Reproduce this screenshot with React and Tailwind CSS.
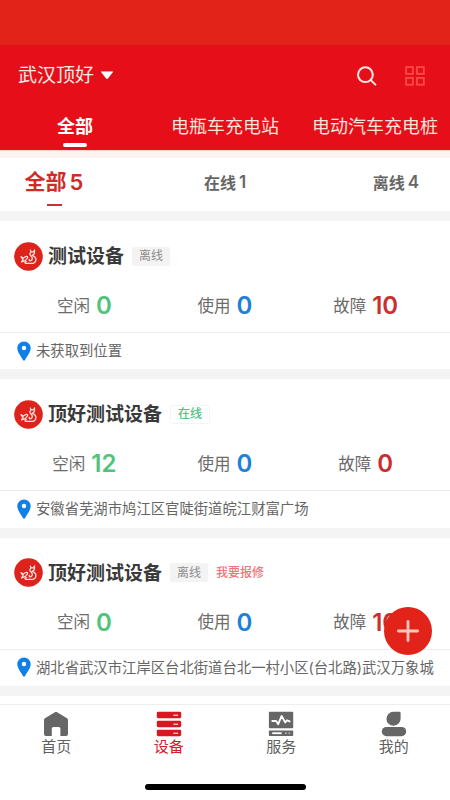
import React from "react";

const CATEGORIES = ["全部", "电瓶车充电站", "电动汽车充电桩"];

const FILTERS = [
  { label: "全部", count: 5, active: true },
  { label: "在线", count: 1 },
  { label: "离线", count: 4 },
];

const DEVICES = [
  { name: "测试设备", online: false, idle: 0, used: 0, fault: 10, address: "未获取到位置" },
  {
    name: "顶好测试设备",
    online: true,
    idle: 12,
    used: 0,
    fault: 0,
    address: "安徽省芜湖市鸠江区官陡街道皖江财富广场",
  },
  {
    name: "顶好测试设备",
    online: false,
    repair: true,
    idle: 0,
    used: 0,
    fault: 10,
    address: "湖北省武汉市江岸区台北街道台北一村小区(台北路)武汉万象城",
  },
];

/* ─── icons ─── */
function SearchIcon() {
  return (
    <svg width="20" height="20" viewBox="0 0 20 20" fill="none" stroke="#ffe9e4" strokeWidth="2" strokeLinecap="round">
      <circle cx="8.4" cy="8.7" r="7.4" />
      <path d="M13.8 14.1L18.4 18.6" />
    </svg>
  );
}

function GridIcon() {
  return (
    <svg width="20" height="20" viewBox="0 0 20 20" fill="none" stroke="#fb4a48" strokeWidth="1.8">
      <rect x="1.1" y="1.1" width="6.8" height="6.8" />
      <rect x="12" y="1.1" width="6.8" height="6.8" />
      <rect x="1.1" y="11.9" width="6.8" height="6.8" />
      <rect x="12" y="11.9" width="6.8" height="6.8" />
    </svg>
  );
}

function BrandLogo() {
  return (
    <svg width="29" height="29" viewBox="0 0 30 30" className="shrink-0">
      <circle cx="15" cy="15" r="14.8" fill="#dc231c" />
      <g fill="none" stroke="#ffe4df" strokeWidth="1.3" strokeLinecap="round" strokeLinejoin="round">
        <path d="M17 8.4L17.6 10.2H20.2L21.2 8.2V11.2C21.2 12.8 19.8 13.4 18.8 13.9C21.2 14.8 23 16.6 22.6 19C22.2 21.4 19.6 22.3 17 22.2H12.2C10.8 21.6 11.4 20.3 12.8 20.2" />
        <path d="M17.2 10.8C16 12.2 16.2 13.4 17.4 14.2C19.4 15.8 19.4 17.8 17.8 19.2C16.6 20 15.4 19.4 15.8 18" />
        <path d="M7.2 15.2L9.8 16.6L12.2 15C13.8 14.4 14.8 15.6 13.6 17L11.6 19.2L7.8 20.6L9.4 18.2Z" />
      </g>
    </svg>
  );
}

function PinIcon() {
  return (
    <svg width="14" height="20" viewBox="0 0 14 20" className="shrink-0">
      <path
        fill="#1180e6"
        fillRule="evenodd"
        d="M7 .4C3.3.4.3 3.4.3 7.1C.3 11.3 4.2 15.6 5.9 18.9C6.4 19.8 7.6 19.8 8.1 18.9C9.8 15.6 13.7 11.3 13.7 7.1C13.7 3.4 10.7.4 7 .4ZM7 4.8A2.2 2.2 0 1 1 7 9.2A2.2 2.2 0 1 1 7 4.8Z"
      />
    </svg>
  );
}

function HomeIcon() {
  return (
    <svg width="26" height="26" viewBox="0 0 26 26">
      <path
        fill="#666"
        d="M11.9 1.2Q13 .5 14.1 1.2L24 7.2Q25 7.9 25 9V23Q25 25 23 25H17.4V17.6Q17.4 16 15.8 16H10.4Q8.8 16 8.8 17.6V25H3Q1 25 1 23V9Q1 7.9 2 7.2Z"
      />
    </svg>
  );
}

function DeviceIcon() {
  return (
    <svg width="26" height="26" viewBox="0 0 26 26">
      {[0.7, 9.7, 18.7].map((y) => (
        <g key={y}>
          <rect x="0.8" y={y} width="24.4" height="6.5" rx="1.4" fill="#d71722" />
          <path d={`M17.4 ${y + 3.6}H22`} stroke="#ffd9d6" strokeWidth="1.3" />
        </g>
      ))}
    </svg>
  );
}

function ServiceIcon() {
  return (
    <svg width="26" height="26" viewBox="0 0 26 26" fill="none">
      <rect x="0.9" y="0.8" width="24.3" height="16.4" rx="0.8" fill="#666" />
      <path
        d="M4.3 10H8.2L10.2 13.2L13.6 5L17.2 11.4L19 9.3L21.6 10.4"
        stroke="#fff"
        strokeWidth="1.9"
        strokeLinecap="round"
        strokeLinejoin="round"
      />
      <rect x="0.9" y="19.4" width="24.3" height="5.6" rx="0.8" fill="#666" />
      <path d="M4.2 22.2H13.6" stroke="#fff" strokeWidth="1.8" />
      <path d="M17 22.2H18.8M20.4 22.2H22.2" stroke="#b4b4b4" strokeWidth="1.5" />
    </svg>
  );
}

function MineIcon() {
  return (
    <svg width="26" height="26" viewBox="0 0 26 26" fill="#666">
      <path d="M12.4.8H18.4Q19.6.8 19.6 2V7.6A7.1 7 0 1 1 12.4.8Z" />
      <rect x="0.8" y="16" width="24.4" height="9.2" rx="4.6" />
    </svg>
  );
}

const NAV = [
  { label: "首页", icon: HomeIcon },
  { label: "设备", icon: DeviceIcon, active: true },
  { label: "服务", icon: ServiceIcon },
  { label: "我的", icon: MineIcon },
];

/* ─── header ─── */
function Header() {
  return (
    <header className="shrink-0 bg-[#e60f19]">
      <div className="h-[45px] bg-[#e2231a]" />
      <div className="flex h-[61px] items-center justify-between pl-[18px] pr-[25px]">
        <button className="flex items-center gap-[6px] text-[19px] leading-none text-[#ffebe6]">
          武汉顶好
          <svg width="14" height="9" viewBox="0 0 14 9">
            <path d="M1.2.8H12.8L7.7 7.4Q7 8.2 6.3 7.4Z" fill="#fff" stroke="#fff" strokeWidth=".6" strokeLinejoin="round" />
          </svg>
        </button>
        <div className="flex items-center gap-7">
          <SearchIcon />
          <GridIcon />
        </div>
      </div>
      <nav className="grid h-11 grid-cols-3">
        {CATEGORIES.map((name, i) => (
          <div key={name} className="flex flex-col items-center pt-[8px] text-[18px] leading-[26px] whitespace-nowrap text-[#ffe3dd]">
            <span className={i === 0 ? "font-bold text-white" : ""}>{name}</span>
            {i === 0 && <span className="mt-[3px] h-[4px] w-6 rounded-full bg-white" />}
          </div>
        ))}
      </nav>
    </header>
  );
}

function FilterBar() {
  return (
    <div className="flex h-[53px] shrink-0 justify-between bg-white">
      {FILTERS.map((f) => (
        <div key={f.label} className="flex w-[108px] flex-col items-center font-bold">
          <div
            className={
              f.active
                ? "flex h-12 items-center gap-[3px] text-[21px] text-[#cf2b27]"
                : "flex h-[50px] items-center gap-[3px] text-[16px] text-[#666]"
            }
          >
            <span>{f.label}</span>
            <span className={f.active ? "text-[22px] font-semibold" : "text-[17px] font-semibold"}>{f.count}</span>
          </div>
          {f.active && <span className="-mt-[2px] h-[2px] w-[15px] bg-[#c93036]" />}
        </div>
      ))}
    </div>
  );
}

function Stat({ label, value, color }) {
  return (
    <div className="flex items-center justify-center gap-[6px]">
      <span className="text-[16.5px] text-[#6c6c6c]">{label}</span>
      <span className={`text-[24px] leading-none font-semibold ${color}`}>{value}</span>
    </div>
  );
}

function DeviceCard({ device }) {
  return (
    <section className="h-[148.4px] shrink-0 bg-white">
      <div className="flex h-[70px] items-center pl-[14px]">
        <BrandLogo />
        <h2 className="mt-px ml-[5px] text-[19px] leading-none font-bold text-[#3a3a3a]">{device.name}</h2>
        {device.online ? (
          <span className="ml-2 flex h-[19px] w-10 items-center justify-center rounded-[3px] border border-[#f3f5f4] text-[12px] font-medium text-[#50c37c]">
            在线
          </span>
        ) : (
          <span className="ml-2 flex h-[19px] w-[38px] items-center justify-center rounded-[2px] bg-[#f3f3f3] text-[12px] text-[#8c8c8c]">
            离线
          </span>
        )}
        {device.repair && <span className="ml-2 text-[12px] font-medium text-[#ef7377]">我要报修</span>}
      </div>
      <div className="grid h-[41px] grid-cols-3 px-[14px] pb-[11px]">
        <Stat label="空闲" value={device.idle} color="text-[#50c37c]" />
        <Stat label="使用" value={device.used} color="text-[#1c80d6]" />
        <Stat label="故障" value={device.fault} color="text-[#cb2e2e]" />
      </div>
      <div className="flex h-[36px] items-center gap-[5px] border-t-[1.5px] border-[#ededed] pl-[17px]">
        <PinIcon />
        <span className="text-[14.35px] whitespace-nowrap text-[#666]">{device.address}</span>
      </div>
    </section>
  );
}

function TabBar() {
  return (
    <footer className="flex h-[96px] shrink-0 flex-col items-center justify-between border-t border-[#eee] bg-white pb-[10px]">
      <nav className="grid w-full grid-cols-4 pt-[6px]">
        {NAV.map(({ label, icon: Icon, active }) => (
          <button
            key={label}
            className={`flex flex-col items-center text-[15px] leading-[20px] ${active ? "text-[#d5202b]" : "text-[#5f5f5f]"}`}
          >
            <Icon />
            {label}
          </button>
        ))}
      </nav>
      <span className="h-[6px] w-[161px] rounded-full bg-black" />
    </footer>
  );
}

export default function App() {
  return (
    <div className="relative flex h-[800px] w-[450px] flex-col overflow-hidden bg-[#f4f4f4] font-[Inter,'Noto_Sans_CJK_SC',sans-serif]">
      <Header />
      <div className="h-2 shrink-0 border-t border-[#ffd5d1] bg-[#fbf3f2]" />
      <FilterBar />
      <main className="flex min-h-0 flex-1 flex-col gap-[10px] overflow-hidden pt-[10px]">
        {DEVICES.map((d, i) => (
          <DeviceCard key={i} device={d} />
        ))}
        <div className="h-[148px] shrink-0 bg-white" />
      </main>
      <TabBar />

      {/* floating add button */}
      <button className="absolute top-[607px] left-[384px] flex h-12 w-12 items-center justify-center rounded-full bg-[#e2231a]">
        <svg width="22" height="22" viewBox="0 0 22 22" stroke="#ffc6c0" strokeWidth="2.8" strokeLinecap="round">
          <path d="M11 1.4V20.6M1.4 11H20.6" />
        </svg>
      </button>
    </div>
  );
}
